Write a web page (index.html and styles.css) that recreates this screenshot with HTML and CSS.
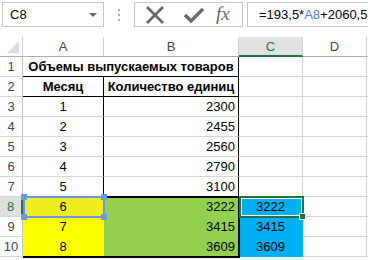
FILE: index.html
```html
<!DOCTYPE html>
<html lang="ru">
<head>
  <meta charset="UTF-8">
  <title>Лист</title>
  <link rel="stylesheet" href="styles.css">
</head>
<body>
  <div class="toolbar">
    <div class="namebox">
      <span>C8</span>
      <span class="drop"></span>
    </div>
    <div class="dots"><i></i><i></i><i></i></div>
    <div class="buttons">
      <svg class="ico-x" width="22" height="22" viewBox="0 0 22 22">
        <path d="M3 3 L19 19 M19 3 L3 19" stroke="#666" stroke-width="2.6" fill="none"/>
      </svg>
      <svg class="ico-ok" width="22" height="22" viewBox="0 0 22 22">
        <path d="M2 11 L8 17 L20 5" stroke="#666" stroke-width="3.2" fill="none"/>
      </svg>
      <span class="fx">fx</span>
    </div>
    <div class="formula">=193,5*<span class="ref">A8</span>+2060,5</div>
  </div>

  <div class="sheet">
    <div class="corner"></div>
    <div class="colhead">A</div>
    <div class="colhead">B</div>
    <div class="colhead active">C</div>
    <div class="colhead">D</div>
    <div class="colhead end"></div>

    <div class="rowhead">1</div>
    <div class="cell title">Объемы выпускаемых товаров</div>
    <div class="cell"></div><div class="cell"></div><div class="cell end"></div>

    <div class="rowhead">2</div>
    <div class="cell bold bline rline">Месяц</div>
    <div class="cell bold bline rline">Количество единиц</div>
    <div class="cell"></div><div class="cell"></div><div class="cell end"></div>

    <div class="rowhead">3</div>
    <div class="cell center rline">1</div>
    <div class="cell num rline">2300</div>
    <div class="cell"></div><div class="cell"></div><div class="cell end"></div>

    <div class="rowhead">4</div>
    <div class="cell center rline">2</div>
    <div class="cell num rline">2455</div>
    <div class="cell"></div><div class="cell"></div><div class="cell end"></div>

    <div class="rowhead">5</div>
    <div class="cell center rline">3</div>
    <div class="cell num rline">2560</div>
    <div class="cell"></div><div class="cell"></div><div class="cell end"></div>

    <div class="rowhead">6</div>
    <div class="cell center rline">4</div>
    <div class="cell num rline">2790</div>
    <div class="cell"></div><div class="cell"></div><div class="cell end"></div>

    <div class="rowhead">7</div>
    <div class="cell center rline">5</div>
    <div class="cell num rline">3100</div>
    <div class="cell"></div><div class="cell"></div><div class="cell end"></div>

    <div class="rowhead active">8</div>
    <div class="cell center yellow sel">6</div>
    <div class="cell num green">3222</div>
    <div class="cell center blue current">3222</div>
    <div class="cell"></div><div class="cell end"></div>

    <div class="rowhead">9</div>
    <div class="cell center yellow">7</div>
    <div class="cell num green">3415</div>
    <div class="cell center blue">3415</div>
    <div class="cell"></div><div class="cell end"></div>

    <div class="rowhead">10</div>
    <div class="cell center yellow">8</div>
    <div class="cell num green">3609</div>
    <div class="cell center blue">3609</div>
    <div class="cell"></div><div class="cell end"></div>

    <div class="block"></div>
    <div class="selbox"><i class="h1"></i><i class="h2"></i><i class="h3"></i><i class="h4"></i></div>
    <div class="curbox"><i></i></div>
  </div>
</body>
</html>
```

FILE: styles.css
```css
body {
  margin: 0;
  background: #fff;
  font-family: "Liberation Sans", Arial, sans-serif;
  font-size: 13px;
  color: #000;
  width: 368px;
  height: 260px;
  overflow: hidden;
}

/* formula bar */
.toolbar {
  display: flex;
  align-items: stretch;
  height: 25px;
  padding-top: 2px;
}
.namebox {
  margin-left: 2px;
  border: 1px solid #c6c6c6;
  display: flex;
  align-items: center;
  justify-content: space-between;
  padding: 0 6px 0 7px;
  box-sizing: border-box;
  width: 102px;
  font-size: 13px;
}
.drop {
  width: 0;
  height: 0;
  border-left: 4px solid transparent;
  border-right: 4px solid transparent;
  border-top: 4px solid #666;
}
.dots {
  width: 30px;
  display: flex;
  flex-direction: column;
  align-items: center;
  justify-content: center;
  gap: 3px;
}
.dots i {
  width: 2px;
  height: 2px;
  background: #b0b0b0;
}
.buttons {
  width: 109px;
  border: 1px solid #c6c6c6;
  box-sizing: border-box;
  display: flex;
  align-items: center;
  padding-left: 9px;
}
.ico-ok {
  margin-left: 17px;
}
.fx {
  font-family: "Liberation Serif", serif;
  font-style: italic;
  font-size: 19px;
  color: #666;
  margin-left: 11px;
  margin-top: -2px;
}
.formula {
  flex: 1;
  margin-left: 4px;
  border: 1px solid #c6c6c6;
  border-right: none;
  display: flex;
  align-items: center;
  padding-left: 11px;
  white-space: nowrap;
  overflow: hidden;
  font-size: 13px;
}
.ref {
  color: #4a7fe8;
}

/* grid */
.sheet {
  position: relative;
  margin-top: 10px;
  display: grid;
  grid-template-columns: 23px 81px 135px 64px 64px 1fr;
  grid-template-rows: repeat(11, 20px);
}
.sheet > div {
  box-sizing: border-box;
}
.corner {
  border-right: 1px solid #d4d4d4;
  border-bottom: 1px solid #ababab;
  position: relative;
}
.corner::after {
  content: "";
  position: absolute;
  right: 3px;
  bottom: 3px;
  border-left: 12px solid transparent;
  border-bottom: 12px solid #dcdcdc;
}
.colhead {
  border-right: 1px solid #d4d4d4;
  border-bottom: 1px solid #ababab;
  text-align: center;
  line-height: 19px;
  color: #444;
}
.colhead.active {
  background: #e1e1e1;
  border-bottom: 2px solid #217346;
  color: #217346;
}
.rowhead {
  border-right: 1px solid #c6c6c6;
  border-bottom: 1px solid #d4d4d4;
  text-align: center;
  line-height: 19px;
  color: #444;
}
.rowhead.active {
  background: #e1e1e1;
  border-right: 2px solid #217346;
  color: #217346;
}
.cell {
  border-right: 1px solid #d4d4d4;
  border-bottom: 1px solid #d4d4d4;
  line-height: 19px;
  padding: 0 3px;
  white-space: nowrap;
}
.cell.end,
.colhead.end {
  border-right: none;
}
.title {
  grid-column: span 2;
  font-weight: bold;
  text-align: center;
  border-right-color: #000 !important;
  border-bottom-color: #000 !important;
  padding-left: 4px;
}
.bold {
  font-weight: bold;
  text-align: center;
}
.center {
  text-align: center;
}
.num {
  text-align: right;
}
.bline {
  border-bottom-color: #000;
}
.rline {
  border-right-color: #000;
}
.yellow {
  background: #ffff00;
  border-color: #ffff00;
}
.yellow.sel {
  background: #eeee1e;
}
.green {
  background: #92d050;
  border-color: #92d050;
}
.blue {
  background: #00b0f0;
  border-color: #00b0f0;
}

/* overlays */
.block {
  position: absolute;
  left: 23px;
  top: 159px;
  width: 217px;
  height: 62px;
  border: 2px solid #000;
  border-left: none;
  box-sizing: border-box;
  pointer-events: none;
}
.selbox {
  position: absolute;
  left: 23px;
  top: 159px;
  width: 82px;
  height: 22px;
  border: 2px solid #6a97e6;
  box-sizing: border-box;
}
.selbox i {
  position: absolute;
  width: 6px;
  height: 6px;
  background: #6a97e6;
}
.selbox .h1 { left: -4px; top: -4px; }
.selbox .h2 { right: -4px; top: -4px; }
.selbox .h3 { left: -4px; bottom: -4px; }
.selbox .h4 { right: -4px; bottom: -4px; }
.curbox {
  position: absolute;
  left: 239px;
  top: 159px;
  width: 65px;
  height: 22px;
  border: 2px solid #217346;
  box-shadow: inset 0 0 0 1px #fff;
  box-sizing: border-box;
}
.curbox i {
  position: absolute;
  right: -4px;
  bottom: -4px;
  width: 5px;
  height: 5px;
  background: #217346;
  border: 1px solid #fff;
}
```
